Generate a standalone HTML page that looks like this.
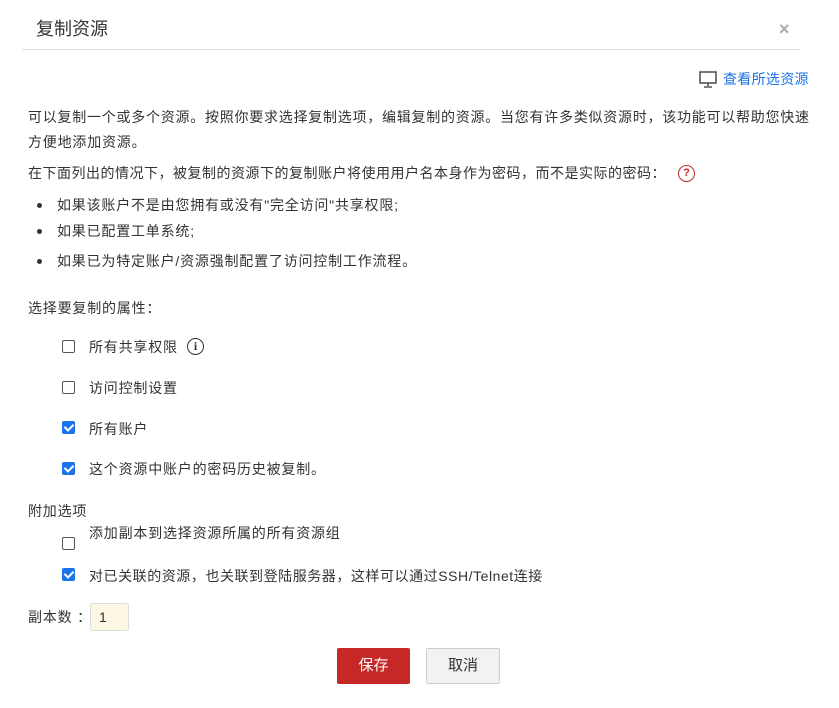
<!DOCTYPE html>
<html><head><meta charset="utf-8"><style>
body{margin:0;width:839px;height:708px;background:#fff;font-family:"Liberation Sans","Noto Sans CJK SC",sans-serif;color:#333;position:relative;overflow:hidden}
.a{position:absolute;white-space:nowrap;font-size:14px;letter-spacing:0.8px;line-height:20px}
.cb{position:absolute;width:11px;height:11px;border:1px solid #555;border-radius:2px;background:#fff}
.cb.on{background:#1a73e8;border-color:#1a73e8}
.cb.on::after{content:"";position:absolute;left:3px;top:0px;width:4px;height:7px;border:solid #fff;border-width:0 2px 2px 0;transform:rotate(45deg)}
.dot{position:absolute;width:5px;height:5px;border-radius:50%;background:#333}
</style></head><body>
<div class="a" style="left:36px;top:19px;font-size:18px;letter-spacing:0">复制资源</div>
<div class="a" style="left:779px;top:19px;font-size:18px;color:#aaa;font-weight:bold;letter-spacing:0">×</div>
<div style="position:absolute;left:22px;top:49px;width:778px;height:1px;background:#ddd"></div>
<svg style="position:absolute;left:699px;top:71px" width="19" height="18" viewBox="0 0 19 18"><rect x="1" y="1" width="16" height="11" fill="none" stroke="#555" stroke-width="1.6"/><path d="M9 12v3M5 16h8" stroke="#555" stroke-width="1.6"/></svg>
<div class="a" style="left:723px;top:69px;color:#1a73e8;letter-spacing:0.3px">查看所选资源</div>
<div class="a" style="left:28px;top:107px;letter-spacing:0.75px">可以复制一个或多个资源。按照你要求选择复制选项，编辑复制的资源。当您有许多类似资源时，该功能可以帮助您快速</div>
<div class="a" style="left:28px;top:132px">方便地添加资源。</div>
<div class="a" style="left:28px;top:163px;letter-spacing:0.5px">在下面列出的情况下，被复制的资源下的复制账户将使用用户名本身作为密码，而不是实际的密码：</div>
<div style="position:absolute;left:678px;top:165px;width:15px;height:15px;border:1.5px solid #c62828;border-radius:50%;color:#c62828;font:bold 11px 'Liberation Sans';text-align:center;line-height:15px">?</div>
<div class="dot" style="left:37px;top:203px"></div><div class="a" style="left:57px;top:195px">如果该账户不是由您拥有或没有"完全访问"共享权限;</div>
<div class="dot" style="left:37px;top:229px"></div><div class="a" style="left:57px;top:221px">如果已配置工单系统;</div>
<div class="dot" style="left:37px;top:259px"></div><div class="a" style="left:57px;top:251px">如果已为特定账户/资源强制配置了访问控制工作流程。</div>
<div class="a" style="left:28px;top:298px">选择要复制的属性：</div>
<div class="cb" style="left:62px;top:340px"></div><div class="a" style="left:89px;top:337px">所有共享权限</div>
<div style="position:absolute;left:187px;top:338px;width:15px;height:15px;border:1.5px solid #333;border-radius:50%;font:bold 12px 'Liberation Serif';text-align:center;line-height:15px">i</div>
<div class="cb" style="left:62px;top:381px"></div><div class="a" style="left:89px;top:378px">访问控制设置</div>
<div class="cb on" style="left:62px;top:421px"></div><div class="a" style="left:89px;top:419px">所有账户</div>
<div class="cb on" style="left:62px;top:462px"></div><div class="a" style="left:89px;top:459px">这个资源中账户的密码历史被复制。</div>
<div class="a" style="left:28px;top:501px">附加选项</div>
<div class="cb" style="left:62px;top:537px"></div><div class="a" style="left:89px;top:523px">添加副本到选择资源所属的所有资源组</div>
<div class="cb on" style="left:62px;top:568px"></div><div class="a" style="left:89px;top:566px;letter-spacing:0.55px">对已关联的资源，也关联到登陆服务器，这样可以通过SSH/Telnet连接</div>
<div class="a" style="left:28px;top:607px">副本数 ：</div>
<div style="position:absolute;left:90px;top:603px;width:39px;height:28px;border:1px solid #ddd;border-radius:3px;background:#fdf8e4;font-size:14px;line-height:27px;padding-left:8px;box-sizing:border-box">1</div>
<div style="position:absolute;left:337px;top:648px;width:73px;height:36px;background:#c62828;border-radius:2px;color:#fff;font-size:15px;line-height:36px;text-align:center">保存</div>
<div style="position:absolute;left:426px;top:648px;width:74px;height:36px;background:#f2f2f2;border:1px solid #ccc;box-sizing:border-box;border-radius:2px;font-size:15px;line-height:34px;text-align:center">取消</div>
</body></html>
